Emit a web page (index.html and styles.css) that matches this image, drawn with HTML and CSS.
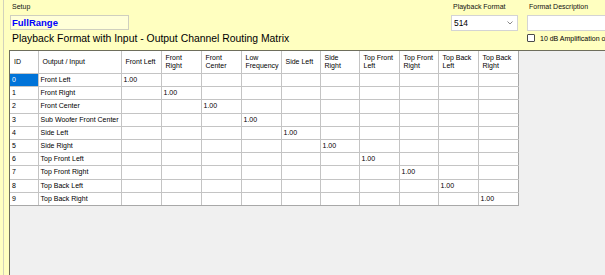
FILE: index.html
```html
<!DOCTYPE html>
<html lang="en">
<head>
    <meta charset="UTF-8">
    <meta name="viewport" content="width=device-width, initial-scale=1.0">
    <title>Playback Format Routing</title>
    <link rel="stylesheet" href="styles.css">
</head>
<body>
    <div class="panel">
        <div class="top">
            <div class="setup">
                <div class="label">Setup</div>
                <div class="textbox name">FullRange</div>
                <div class="title">Playback Format with Input - Output Channel Routing Matrix</div>
            </div>
            <div class="format">
                <div class="label">Playback Format</div>
                <div class="combo">
                    <span>514</span>
                    <svg class="chevron" width="6" height="4" viewBox="0 0 6 4"><path d="M0.5 0.5 L3 3 L5.5 0.5" fill="none" stroke="#7a7a7a" stroke-width="0.9"/></svg>
                </div>
            </div>
            <div class="description">
                <div class="label">Format Description</div>
                <div class="textbox desc"></div>
                <div class="check-row">
                    <span class="checkbox"></span>
                    <span class="check-label">10 dB Amplification of</span>
                </div>
            </div>
        </div>

        <div class="grid">
            <table class="matrix">
                <colgroup>
                    <col style="width:28px"><col style="width:83px">
                    <col style="width:40px"><col style="width:40px"><col style="width:40px"><col style="width:40px"><col style="width:39px">
                    <col style="width:39px"><col style="width:40px"><col style="width:39px"><col style="width:40px"><col style="width:40px">
                </colgroup>
                <thead>
                    <tr>
                        <th>ID</th>
                        <th>Output / Input</th>
                        <th>Front Left</th>
                        <th>Front<br>Right</th>
                        <th>Front<br>Center</th>
                        <th>Low<br>Frequency</th>
                        <th>Side Left</th>
                        <th>Side<br>Right</th>
                        <th>Top Front<br>Left</th>
                        <th>Top Front<br>Right</th>
                        <th>Top Back<br>Left</th>
                        <th>Top Back<br>Right</th>
                    </tr>
                </thead>
                <tbody>
                    <tr><td class="selected">0</td><td>Front Left</td><td>1.00</td><td></td><td></td><td></td><td></td><td></td><td></td><td></td><td></td><td></td></tr>
                    <tr><td>1</td><td>Front Right</td><td></td><td>1.00</td><td></td><td></td><td></td><td></td><td></td><td></td><td></td><td></td></tr>
                    <tr><td>2</td><td>Front Center</td><td></td><td></td><td>1.00</td><td></td><td></td><td></td><td></td><td></td><td></td><td></td></tr>
                    <tr><td>3</td><td>Sub Woofer Front Center</td><td></td><td></td><td></td><td>1.00</td><td></td><td></td><td></td><td></td><td></td><td></td></tr>
                    <tr><td>4</td><td>Side Left</td><td></td><td></td><td></td><td></td><td>1.00</td><td></td><td></td><td></td><td></td><td></td></tr>
                    <tr><td>5</td><td>Side Right</td><td></td><td></td><td></td><td></td><td></td><td>1.00</td><td></td><td></td><td></td><td></td></tr>
                    <tr><td>6</td><td>Top Front Left</td><td></td><td></td><td></td><td></td><td></td><td></td><td>1.00</td><td></td><td></td><td></td></tr>
                    <tr><td>7</td><td>Top Front Right</td><td></td><td></td><td></td><td></td><td></td><td></td><td></td><td>1.00</td><td></td><td></td></tr>
                    <tr><td>8</td><td>Top Back Left</td><td></td><td></td><td></td><td></td><td></td><td></td><td></td><td></td><td>1.00</td><td></td></tr>
                    <tr><td>9</td><td>Top Back Right</td><td></td><td></td><td></td><td></td><td></td><td></td><td></td><td></td><td></td><td>1.00</td></tr>
                </tbody>
            </table>
        </div>
    </div>
</body>
</html>
```

FILE: styles.css
```css
html, body {
    margin: 0;
    width: 605px;
    height: 275px;
    overflow: hidden;
}
body {
    background-color: #ffffc0;
    font-family: "Liberation Sans", Arial, sans-serif;
    color: #000;
}
.panel {
    margin-left: 3px;
    height: 100%;
    border-left: 1px solid #d2d2bc;
    display: flex;
    flex-direction: column;
}
.top {
    height: 50px;
    flex-shrink: 0;
    display: flex;
    align-items: flex-start;
    white-space: nowrap;
}
.label {
    font-size: 7px;
    line-height: 9px;
    margin-top: 2px;
    margin-left: 2px;
    color: #111;
}
.setup {
    margin-left: 6px;
    width: 322px;
    flex-shrink: 0;
}
.textbox {
    box-sizing: border-box;
    margin-top: 4px;
    border: 1px solid #cfcfbf;
    height: 15px;
}
.name {
    width: 119px;
    background-color: #ffffd8;
    color: #0000ff;
    font-weight: bold;
    font-size: 9.5px;
    line-height: 13px;
    padding-left: 1px;
}
.title {
    font-size: 10.4px;
    line-height: 12px;
    margin-top: 3px;
    margin-left: 2px;
}
.format {
    margin-left: 119px;
    width: 67px;
    flex-shrink: 0;
}
.combo {
    box-sizing: border-box;
    margin-top: 4px;
    height: 16px;
    background-color: #fff;
    border: 1px solid #d4d4d4;
    display: flex;
    align-items: center;
    justify-content: space-between;
    padding: 0 4px 0 2px;
    font-size: 8.4px;
}
.description {
    margin-left: 9px;
    width: 140px;
    flex-shrink: 0;
}
.desc {
    height: 16px;
    background-color: #fff;
    border-color: #d4d4d4;
}
.check-row {
    display: flex;
    align-items: center;
    margin-top: 3px;
}
.checkbox {
    box-sizing: border-box;
    width: 8px;
    height: 8px;
    border: 1px solid #4a4a4a;
    border-radius: 1px;
    background-color: #fff;
}
.check-label {
    font-size: 7px;
    margin-left: 5px;
}
.grid {
    flex: 1;
    margin-left: 5px;
    border-top: 1px solid #6e6e5c;
    border-left: 1px solid #6e6e5c;
    background-color: #f0f0f0;
    overflow: hidden;
}
.matrix {
    table-layout: fixed;
    border-collapse: collapse;
    width: 508px;
    font-size: 7px;
    background-color: #fff;
}
.matrix th {
    height: 22px;
    padding: 0 0 0 4px;
    font-weight: normal;
    text-align: left;
    line-height: 8px;
    vertical-align: middle;
    border-right: 1px solid #c4c4c4;
    border-bottom: 1px solid #c4c4c4;
    white-space: nowrap;
    overflow: hidden;
}
.matrix tbody tr {
    height: 13.2px;
}
.matrix td {
    padding: 0 0 0 2px;
    line-height: 8px;
    border-right: 1px solid #c4c4c4;
    border-bottom: 1px solid #c4c4c4;
    white-space: nowrap;
    overflow: hidden;
}
.matrix td:last-child, .matrix th:last-child {
    border-right-color: #a8a8a8;
}
.matrix tbody tr:last-child td {
    border-bottom-color: #a8a8a8;
}
.matrix td.selected {
    background-color: #0073d8;
    color: #fff;
}
```
